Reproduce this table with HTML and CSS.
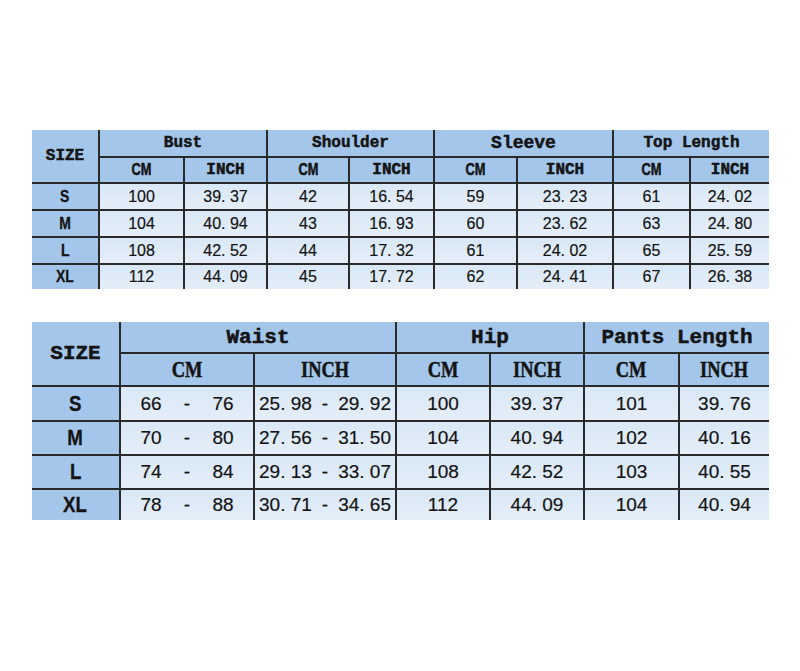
FILE: index.html
```html
<!DOCTYPE html>
<html>
<head>
<meta charset="utf-8">
<link rel="stylesheet" href="styles.css">
</head>
<body>
<div class="page">
  <table class="chart top">
    <colgroup>
      <col style="width:67px"><col style="width:85px"><col style="width:83px"><col style="width:82px"><col style="width:85px"><col style="width:83px"><col style="width:96px"><col style="width:77px"><col style="width:79px">
    </colgroup>
    <tr class="h1">
      <th rowspan="2" class="size-head">SIZE</th>
      <th colspan="2" class="grp">Bust</th>
      <th colspan="2" class="grp">Shoulder</th>
      <th colspan="2" class="grp big">Sleeve</th>
      <th colspan="2" class="grp">Top Length</th>
    </tr>
    <tr class="h2">
      <th><span class="cm">CM</span></th><th class="inch">INCH</th>
      <th><span class="cm">CM</span></th><th class="inch">INCH</th>
      <th><span class="cm">CM</span></th><th class="inch">INCH</th>
      <th><span class="cm">CM</span></th><th class="inch">INCH</th>
    </tr>
    <tr class="r27"><th class="sz"><span>S</span></th><td>100</td><td>39. 37</td><td>42</td><td>16. 54</td><td>59</td><td>23. 23</td><td>61</td><td>24. 02</td></tr>
    <tr class="r27"><th class="sz"><span>M</span></th><td>104</td><td>40. 94</td><td>43</td><td>16. 93</td><td>60</td><td>23. 62</td><td>63</td><td>24. 80</td></tr>
    <tr class="r27"><th class="sz"><span>L</span></th><td>108</td><td>42. 52</td><td>44</td><td>17. 32</td><td>61</td><td>24. 02</td><td>65</td><td>25. 59</td></tr>
    <tr class="r26"><th class="sz"><span>XL</span></th><td>112</td><td>44. 09</td><td>45</td><td>17. 72</td><td>62</td><td>24. 41</td><td>67</td><td>26. 38</td></tr>
  </table>

  <table class="chart bottom">
    <colgroup>
      <col style="width:88px"><col style="width:134px"><col style="width:142px"><col style="width:94px"><col style="width:94px"><col style="width:95px"><col style="width:90px">
    </colgroup>
    <tr class="h1">
      <th rowspan="2" class="size-head">SIZE</th>
      <th colspan="2" class="grp">Waist</th>
      <th colspan="2" class="grp">Hip</th>
      <th colspan="2" class="grp">Pants Length</th>
    </tr>
    <tr class="h2">
      <th><span class="unit">CM</span></th><th><span class="unit">INCH</span></th>
      <th><span class="unit">CM</span></th><th><span class="unit">INCH</span></th>
      <th><span class="unit">CM</span></th><th><span class="unit">INCH</span></th>
    </tr>
    <tr class="r35"><th class="sz"><span>S</span></th><td><div class="range-cm"><span>66</span><span>-</span><span>76</span></div></td><td><div class="range-in"><span>25. 98</span><span>-</span><span>29. 92</span></div></td><td>100</td><td>39. 37</td><td>101</td><td>39. 76</td></tr>
    <tr class="r34"><th class="sz"><span>M</span></th><td><div class="range-cm"><span>70</span><span>-</span><span>80</span></div></td><td><div class="range-in"><span>27. 56</span><span>-</span><span>31. 50</span></div></td><td>104</td><td>40. 94</td><td>102</td><td>40. 16</td></tr>
    <tr class="r34"><th class="sz"><span>L</span></th><td><div class="range-cm"><span>74</span><span>-</span><span>84</span></div></td><td><div class="range-in"><span>29. 13</span><span>-</span><span>33. 07</span></div></td><td>108</td><td>42. 52</td><td>103</td><td>40. 55</td></tr>
    <tr class="r31"><th class="sz"><span>XL</span></th><td><div class="range-cm"><span>78</span><span>-</span><span>88</span></div></td><td><div class="range-in"><span>30. 71</span><span>-</span><span>34. 65</span></div></td><td>112</td><td>44. 09</td><td>104</td><td>40. 94</td></tr>
  </table>
</div>
</body>
</html>
```

FILE: styles.css
```css
html, body {
  margin: 0;
  padding: 0;
  background: #ffffff;
}

.page {
  padding: 130px 0 0 32px;
  display: flex;
  flex-direction: column;
  align-items: flex-start;
  gap: 33px;
}

.chart {
  border-collapse: collapse;
  table-layout: fixed;
  width: 737px;
  border-style: hidden;
  color: #141414;
}

.chart th,
.chart td {
  border: 2px solid #2a2a2a;
  padding: 0;
  text-align: center;
  vertical-align: middle;
  white-space: nowrap;
  overflow: hidden;
}

.chart th {
  background: #a3c6ea;
  font-family: "Liberation Mono", "DejaVu Sans Mono", monospace;
  font-weight: bold;
  -webkit-text-stroke: 0.5px #141414;
}

.chart td {
  background: linear-gradient(#d9e8f6, #e4eef8);
  font-family: "Liberation Sans", Arial, sans-serif;
  font-weight: normal;
  -webkit-text-stroke: 0.2px #141414;
}

/* ---------- top table ---------- */
.top .h1 th { height: 26px; font-size: 16px; }
.top .h1 th.big { font-size: 18px; }
.top .h2 th { height: 24px; font-size: 16px; }
.top .size-head { font-size: 16px; }
.top tr.r27 > * { height: 25px; }
.top tr.r26 > * { height: 24px; }
.top td { font-size: 16px; }

.cm {
  display: inline-block;
  font-family: "Liberation Sans", Arial, sans-serif;
  font-weight: bold;
  font-size: 16px;
  transform: scaleX(0.8);
}

.sz span {
  display: inline-block;
  font-family: "Liberation Sans", Arial, sans-serif;
  font-weight: bold;
  -webkit-text-stroke: 0.3px #141414;
}
.top .sz span { font-size: 17px; transform: scaleX(0.82); }

/* ---------- bottom table ---------- */
.bottom .h1 th { height: 30px; font-size: 21px; }
.bottom .h2 th { height: 31px; }
.bottom .size-head { font-size: 19px; }
.bottom tr.r35 > * { height: 33px; }
.bottom tr.r34 > * { height: 32px; }
.bottom tr.r31 > * { height: 30px; }
.bottom td { font-size: 19px; }
.bottom .sz span { font-size: 22px; transform: scaleX(0.85); }

.unit {
  display: inline-block;
  font-family: "Liberation Serif", "Times New Roman", serif;
  font-weight: bold;
  font-size: 23px;
  transform: scaleX(0.8);
}

.range-cm {
  display: grid;
  grid-template-columns: 52px 20px 52px;
  justify-content: center;
  align-items: center;
}

.range-in {
  display: flex;
  justify-content: center;
  align-items: center;
  gap: 10px;
}
```
